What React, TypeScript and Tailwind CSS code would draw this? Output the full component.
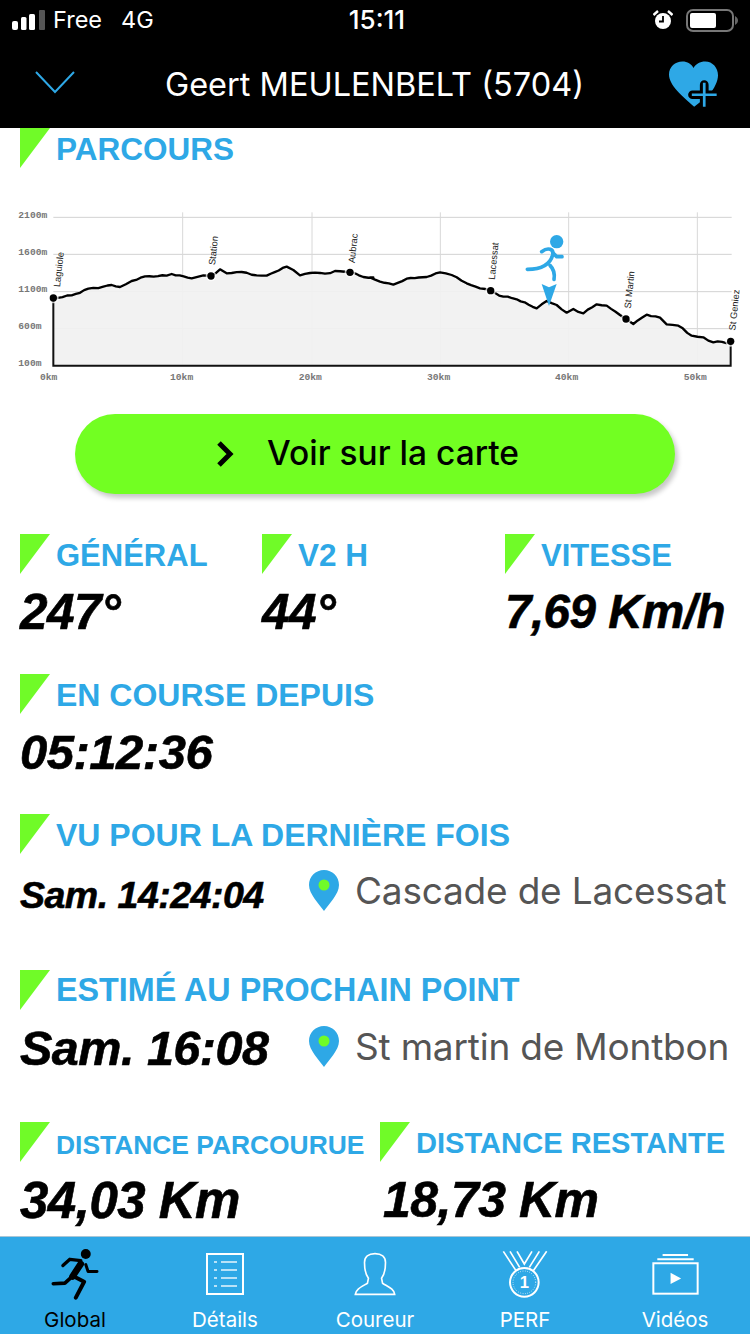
const leftLine: [number, number][] = [
  [160, 294], [215, 286], [265, 266], [310, 260], [335, 255], [360, 261], [395, 243], [435, 229], [500, 227], [515, 222],
  [575, 235], [610, 226], [633, 228], [660, 208], [680, 220], [725, 216], [770, 226], [800, 227], [860, 200], [880, 210],
  [900, 226], [930, 219], [975, 221], [1005, 213], [1050, 216], [1090, 231], [1120, 232],
];
const rightLine: [number, number][] = [
  [0, 232], [30, 245], [70, 254], [110, 236], [170, 231], [210, 217], [245, 225], [290, 250], [330, 265], [362, 272],
  [400, 290], [440, 298], [500, 325], [530, 303], [560, 315], [590, 338], [610, 327], [640, 340], [680, 313], [710, 317],
  [750, 345], [768, 357], [790, 372], [830, 344], [870, 353], [890, 373], [925, 377], [965, 407], [1000, 412], [1030, 427], [1082, 427],
];
const coarse = [...leftLine, ...rightLine.map(([x, y]): [number, number] => [x + 1110, y])];

// the real trace is noisy, so add a small wobble between the read-off points
const trace: string[] = [];
coarse.forEach(([x, y], i) => {
  trace.push(`${x},${y}`);
  const next = coarse[i + 1];
  if (!next) return;
  const steps = Math.floor((next[0] - x) / 12);
  for (let s = 1; s < steps; s++) {
    const px = x + ((next[0] - x) * s) / steps;
    const py = y + ((next[1] - y) * s) / steps + Math.sin(px * 0.37) * 1.6 + Math.sin(px * 0.11) * 1.2;
    trace.push(`${px.toFixed(1)},${py.toFixed(1)}`);
  }
});
const profile = trace.join(" ");

const stops = [
  [160, 294, "Laguiole", 180, 262],
  [633, 228, "Station", 645, 196],
  [1050, 217, "Aubrac", 1064, 190],
  [1472, 272, "Lacessat", 1484, 240],
  [1878, 357, "St Martin", 1892, 326],
  [2192, 424, "St Geniez", 2206, 392],
] as const;

function ProfileChart() {
  return (
    <svg viewBox="0 0 2250 570" className="block h-[190px] w-[750px]">
      {[52, 163, 275, 386].map((y) => (
        <line key={y} x1="160" x2="2195" y1={y} y2={y} stroke="#d2d2d2" strokeWidth="3" />
      ))}
      {[548, 936, 1321, 1706, 2092].map((x) => (
        <line key={x} x1={x} x2={x} y1="37" y2="497" stroke="#d8d8d8" strokeWidth="3" />
      ))}
      <polygon points={`160,497 ${profile} 2192,497`} fill="#f1f1f1" fillOpacity="0.92" />
      <polyline points={profile} fill="none" stroke="#000" strokeWidth="7" strokeLinejoin="round" />
      <polyline points="160,294 160,497 2192,497 2192,427" fill="none" stroke="#111" strokeWidth="6" />

      <g fill="#777" fontFamily="'Liberation Mono', monospace" fontWeight="700" fontSize="29">
        {[["2100m", 52], ["1600m", 163], ["1100m", 275], ["600m", 386], ["100m", 497]].map(([t, y]) => (
          <text key={t} x="55" y={Number(y) + 1}>{t}</text>
        ))}
        {[["0km", 120], ["10km", 510], ["20km", 896], ["30km", 1281], ["40km", 1665], ["50km", 2051]].map(([t, x]) => (
          <text key={t} x={x} y="539">{t}</text>
        ))}
      </g>

      {stops.map(([cx, cy, name, tx, ty]) => (
        <g key={name}>
          <circle cx={cx} cy={cy} r="16" fill="#fff" fillOpacity="0.7" />
          <circle cx={cx} cy={cy} r="11" fill="#000" />
          <text
            x={tx}
            y={ty}
            transform={`rotate(-84 ${tx} ${ty})`}
            fontFamily="'Liberation Sans', sans-serif"
            fontSize="28"
            fill="#222"
          >
            {name}
          </text>
        </g>
      ))}

      <g transform="translate(1110 0)" fill="none" stroke="#2ea8e6" strokeLinecap="round" strokeWidth="11">
        <circle cx="560" cy="125" r="20" fill="#2ea8e6" stroke="none" />
        <path d="M472 208 C 510 208 540 195 548 165 C 552 148 535 140 515 155" />
        <path d="M550 160 L 560 170 L 576 170" />
        <path d="M540 196 C 552 208 555 220 552 238" />
        <polygon points="515,252 537,262 560,252 537,318" fill="#2ea8e6" stroke="none" />
      </g>
    </svg>
  );
}

function Corner() {
  return <div className="h-[40px] w-[30px] shrink-0 bg-[#70fb28] [clip-path:polygon(0_0,100%_0,0_100%)]" />;
}

function Label({ children, size = "text-[32px] pt-[1px]" }: { children: string; size?: string }) {
  return (
    <div className="flex h-[40px] items-center gap-[6px]">
      <Corner />
      <span className={`${size} whitespace-nowrap font-bold leading-none text-[#2ea8e6] [font-family:'Liberation_Sans',sans-serif]`}>
        {children}
      </span>
    </div>
  );
}

function Value({ children, size = "text-[49px]" }: { children: string; size?: string }) {
  return (
    <div className={`${size} flex h-[76px] items-center whitespace-nowrap font-bold italic leading-none tracking-[-0.5px] text-black [-webkit-text-stroke:0.6px_black] [font-family:'Liberation_Sans',sans-serif]`}>
      {children}
    </div>
  );
}

function Pin() {
  return (
    <svg viewBox="0 0 30 41" className="h-[41px] w-[30px] shrink-0">
      <path d="M15 0 C 6.7 0 0 6.6 0 15 C 0 24 10 34 15 41 C 20 34 30 24 30 15 C 30 6.6 23.3 0 15 0 Z" fill="#2ea8e6" />
      <circle cx="15" cy="15" r="5.5" fill="#70fb28" />
    </svg>
  );
}

function PlaceRow({ time, size, place }: { time: string; size: string; place: string }) {
  return (
    <div className="flex h-[76px] items-center">
      <div className="w-[289px] shrink-0">
        <Value size={size}>{time}</Value>
      </div>
      <div className="mb-[3px] flex items-center">
        <Pin />
        <span className="ml-[16px] whitespace-nowrap text-[37px] leading-none tracking-[-0.2px] text-[#555]">{place}</span>
      </div>
    </div>
  );
}

function StatusBar() {
  return (
    <div className="flex h-[40px] items-center justify-between pl-[12px] pr-[11px] text-[23.5px] leading-none text-white">
      <div className="flex w-[260px] items-center">
        <svg viewBox="0 0 33 20" className="h-[20px] w-[33px]">
          <rect x="0" y="11" width="6" height="9" rx="2" fill="#fff" />
          <rect x="9" y="7" width="5.5" height="13" rx="1.5" fill="#fff" />
          <rect x="17" y="4" width="6" height="16" rx="1.5" fill="#fff" />
          <rect x="27" y="0" width="6" height="20" rx="1" fill="#555" />
        </svg>
        <span className="ml-[8px]">Free</span>
        <span className="ml-[19px]">4G</span>
      </div>
      <span className="ml-[3px] text-[26px] font-medium">15:11</span>
      <div className="flex w-[260px] items-center justify-end">
        <svg viewBox="0 0 20 20" className="mr-[13px] h-[20px] w-[20px]">
          <circle cx="10" cy="11" r="8" fill="#fff" />
          <path d="M10 6 V11.5 H6" fill="none" stroke="#000" strokeWidth="1.8" />
          <path d="M0.5 5 L5 1 M19.5 5 L15 1" stroke="#fff" strokeWidth="2.4" />
        </svg>
        <svg viewBox="0 0 53 23" className="h-[23px] w-[53px]">
          <rect x="1" y="1" width="46" height="21" rx="6" fill="none" stroke="#777" strokeWidth="2" />
          <rect x="4" y="4" width="26" height="15" rx="2" fill="#fff" />
          <path d="M49 7 C 51 8 52 10 52 11.5 C 52 13 51 15 49 16 Z" fill="#666" />
        </svg>
      </div>
    </div>
  );
}

function HeartPlus() {
  return (
    <svg viewBox="90 180 146 136" className="h-[46px] w-[49px]">
      <path
        d="M165 316 C 130 285 90 252 90 220 C 90 196 109 181 130 181 C 145 181 157 189 163 200 C 170 189 182 181 198 181 C 220 181 236 200 236 222 C 236 240 225 262 208 282 Z"
        fill="#2ea8e6"
      />
      <path d="M195 250 V310 M160 280 H232" stroke="#000" strokeWidth="26" strokeLinecap="round" />
      <path d="M195 244 V316 M158 280 H232" stroke="#2ea8e6" strokeWidth="8" />
    </svg>
  );
}

function RunnerIcon() {
  return (
    <svg viewBox="60 25 145 155" className="h-[52px] w-[48px]">
      <circle cx="165" cy="42" r="15" fill="#000" />
      <g fill="none" stroke="#000" strokeLinecap="round" strokeLinejoin="round">
        <path d="M150 72 L 125 110" strokeWidth="20" />
        <path d="M150 62 L 117 58 L 96 77" strokeWidth="10" />
        <path d="M165 74 L 172 95 L 199 95" strokeWidth="9" />
        <path d="M122 112 L 102 130 L 67 132" strokeWidth="11" />
        <path d="M125 108 L 160 126 L 135 174" strokeWidth="12" />
      </g>
    </svg>
  );
}

function ListIcon() {
  return (
    <svg viewBox="525 38 114 126" className="h-[42px] w-[38px]" fill="none" stroke="#fff">
      <rect x="528" y="41" width="108" height="120" strokeWidth="6" />
      {[65, 89, 113, 137].map((y) => (
        <g key={y} strokeWidth="4">
          <path d={`M549 ${y} H558`} />
          <path d={`M570 ${y} H618`} />
        </g>
      ))}
    </svg>
  );
}

function PersonIcon() {
  return (
    <svg viewBox="44 34 128 132" className="h-[44px] w-[42px]" fill="none" stroke="#fff" strokeWidth="5">
      <path d="M48 162 C 50 146 65 140 85 128 L 88 113 C 78 100 76 85 76 65 C 76 48 88 38 108 38 C 128 38 140 48 140 65 C 140 85 138 100 128 113 L 131 128 C 150 140 166 146 168 162 Z" />
    </svg>
  );
}

function MedalIcon() {
  return (
    <svg viewBox="488 30 138 144" className="h-[48px] w-[46px]" fill="none" stroke="#fff">
      <path d="M492 34 L 530 92 M512 34 L 541 82 M622 34 L 582 92 M600 34 L 570 82 M533 34 L 555 72 L 578 34" strokeWidth="5" />
      <circle cx="555" cy="127" r="43" strokeWidth="6" fill="#2ea8e6" />
      <circle cx="555" cy="127" r="34" strokeWidth="3" strokeDasharray="2 5" />
      <text x="555" y="145" textAnchor="middle" fill="#fff" stroke="none" fontSize="50" fontWeight="700" fontFamily="'Liberation Sans', sans-serif">
        1
      </text>
    </svg>
  );
}

function VideoIcon() {
  return (
    <svg viewBox="935 40 140 124" className="h-[41px] w-[47px]" fill="none" stroke="#fff">
      <rect x="938" y="68" width="134" height="92" strokeWidth="6" />
      <path d="M950 56 H1060 M966 43 H1043" strokeWidth="6" />
      <polygon points="990,97 1022,114 990,131" fill="#fff" stroke="none" />
    </svg>
  );
}

const tabs = [
  { label: "Global", icon: <RunnerIcon />, active: true },
  { label: "Détails", icon: <ListIcon /> },
  { label: "Coureur", icon: <PersonIcon /> },
  { label: "PERF", icon: <MedalIcon /> },
  { label: "Vidéos", icon: <VideoIcon /> },
];

export default function App() {
  return (
    <div className="flex h-[1334px] w-[750px] flex-col overflow-hidden bg-white [font-family:Inter,sans-serif]">
      <header className="h-[128px] shrink-0 bg-black">
        <StatusBar />
        <div className="flex h-[88px] items-center pl-[35px] pr-[32px]">
          <svg viewBox="0 0 40 24" className="mt-[-4px] h-[24px] w-[40px] shrink-0" fill="none" stroke="#2ea8e6" strokeWidth="2">
            <path d="M1 2 L20 22 L39 2" />
          </svg>
          <h1 className="flex-1 whitespace-nowrap pl-[5px] pt-[2px] text-center text-[32.5px] font-normal leading-none text-white">
            Geert MEULENBELT (5704)
          </h1>
          <HeartPlus />
        </div>
      </header>

      <main className="min-h-0 flex-1 overflow-hidden">
        <div className="px-5">
          <Label size="text-[31.5px] pt-[3px]">PARCOURS</Label>
        </div>
        <div className="mt-[32px]">
          <ProfileChart />
        </div>
        <button className="mx-auto mt-[24px] flex h-[80px] w-[600px] items-center justify-center gap-[33px] rounded-full bg-[#72ff22] pr-[15px] shadow-[3px_4px_5px_rgba(0,0,0,0.22)]">
          <svg viewBox="0 0 18 26" className="h-[26px] w-[18px]" fill="none" stroke="#000" strokeWidth="5">
            <path d="M3 2 L14 13 L3 24" />
          </svg>
          <span className="text-[33.5px] font-medium leading-none text-black">Voir sur la carte</span>
        </button>

        <div className="mt-[40px] grid grid-cols-[242px_243px_1fr] px-5">
          <div>
            <Label size="text-[31px] pt-[3px]">GÉNÉRAL</Label>
            <Value size="text-[49.5px]">247°</Value>
          </div>
          <div>
            <Label size="text-[31.5px] pt-[3px]">V2 H</Label>
            <Value size="text-[49.5px]">44°</Value>
          </div>
          <div>
            <Label size="text-[31px] pt-[3px]">VITESSE</Label>
            <Value size="text-[47.5px]">7,69 Km/h</Value>
          </div>
        </div>

        <div className="mt-[24px] px-5">
          <Label>EN COURSE DEPUIS</Label>
          <Value>05:12:36</Value>
        </div>

        <div className="mt-[24px] px-5">
          <Label>VU POUR LA DERNIÈRE FOIS</Label>
          <PlaceRow time="Sam. 14:24:04" size="text-[37.5px] pt-[8px]" place="Cascade de Lacessat" />
        </div>

        <div className="mt-[40px] px-5">
          <Label size="text-[32.3px] pt-[1px]">ESTIMÉ AU PROCHAIN POINT</Label>
          <PlaceRow time="Sam. 16:08" size="text-[48.5px]" place="St martin de Montbon" />
        </div>

        <div className="mt-[36px] grid grid-cols-[360px_1fr] px-5">
          <div>
            <Label size="text-[26.4px] pt-[6px]">DISTANCE PARCOURUE</Label>
            <Value size="text-[51px]">34,03 Km</Value>
          </div>
          <div>
            <Label size="text-[29.1px] pt-[4px]">DISTANCE RESTANTE</Label>
            <div className="pl-[3px]">
              <Value size="text-[50px]">18,73 Km</Value>
            </div>
          </div>
        </div>
      </main>

      <nav className="grid h-[98px] shrink-0 grid-cols-5 border-t border-[#a9c6d6] bg-[#2ea8e6]">
        {tabs.map((tab) => (
          <div key={tab.label} className="flex flex-col items-center">
            <div className="flex h-[66px] items-center justify-center pt-[8px]">{tab.icon}</div>
            <span className={`mt-[7px] text-[20.5px] leading-none ${tab.active ? "text-black" : "text-white"}`}>{tab.label}</span>
          </div>
        ))}
      </nav>
    </div>
  );
}
